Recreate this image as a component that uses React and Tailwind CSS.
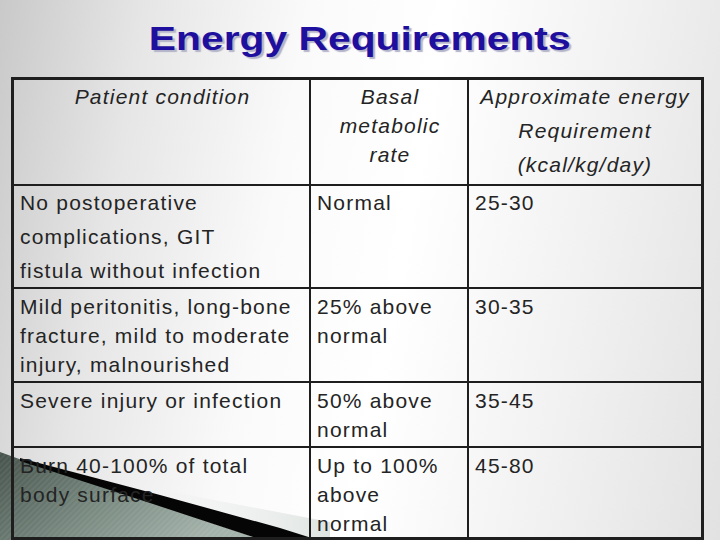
import React from "react";

const F = { fontFamily: '"Liberation Sans", Arial, sans-serif' };

function Cell({ children, className = "" }) {
  return (
    <div className={"border-[#1e1e1e] text-[21px] tracking-[1.2px] text-[#242424] pl-[6px] pr-[4px] " + className}>
      {children}
    </div>
  );
}

export default function App() {
  return (
    <div
      className="relative w-[720px] h-[540px] overflow-hidden bg-[linear-gradient(100deg,#c9c9c9_0%,#e6e6e6_18%,#fafafa_38%,#ffffff_55%,#f1f1f1_78%,#e2e2e2_100%)]"
      style={F}
    >
      <svg className="absolute left-0 top-0" width="720" height="540" viewBox="0 0 720 540">
        <defs>
          <linearGradient id="g1" x1="0" y1="0" x2="1" y2="0.4">
            <stop offset="0" stopColor="#45524b" />
            <stop offset="0.5" stopColor="#76877e" />
            <stop offset="1" stopColor="#a3b2aa" />
          </linearGradient>
          <pattern id="st" width="4" height="4" patternUnits="userSpaceOnUse" patternTransform="rotate(45)">
            <rect width="2" height="4" fill="#ffffff" opacity="0.06" />
          </pattern>
          <linearGradient id="g2" x1="0" y1="0" x2="1" y2="0">
            <stop offset="0" stopColor="#f2f4f3" stopOpacity="0" />
            <stop offset="1" stopColor="#dfe4e1" />
          </linearGradient>
        </defs>
        <polygon points="120,482 330,522 330,540 300,540 160,497" fill="url(#g2)" />
        <polygon points="0,452 22,460 150,502 262,540 0,540" fill="url(#g1)" />
        <polygon points="0,452 22,460 150,502 262,540 0,540" fill="url(#st)" />
        <polygon points="20,458 160,495 280,528 318,540 262,540 150,503 20,461" fill="#050505" />
      </svg>

      <div className="relative">
        <div className="h-[77px] pt-[18px] text-center">
          <span
            className="inline-block scale-x-[1.2] text-[34px] leading-[40px] font-bold text-[#1f0f9e] [text-shadow:2px_2px_1px_#b3b3c9]"
          >
            Energy Requirements
          </span>
        </div>

        <div className="ml-[11px] w-[693px] h-[463px] border-[3px] border-[#1e1e1e] grid grid-cols-[297px_158px_232px] grid-rows-[106px_103px_94px_65px_1fr]">
          <Cell className="border-r-2 border-b-2 italic text-center leading-[29px] pt-[2px]">Patient condition</Cell>
          <Cell className="border-r-2 border-b-2 italic text-center leading-[29px] pt-[2px]">
            Basal<br />metabolic<br />rate
          </Cell>
          <Cell className="border-b-2 italic text-center leading-[34px] pt-0 !pl-0 !pr-0">
            Approximate energy<br />Requirement<br />(kcal/kg/day)
          </Cell>

          <Cell className="border-r-2 border-b-2 leading-[34px]">
            No postoperative<br />complications, GIT<br />fistula without infection
          </Cell>
          <Cell className="border-r-2 border-b-2 leading-[29px] pt-[2px]">Normal</Cell>
          <Cell className="border-b-2 leading-[29px] pt-[2px]">25-30</Cell>

          <Cell className="border-r-2 border-b-2 leading-[29px] pt-[3px]">
            Mild peritonitis, long-bone<br />fracture, mild to moderate<br />injury, malnourished
          </Cell>
          <Cell className="border-r-2 border-b-2 leading-[29px] pt-[3px]">
            25% above<br />normal
          </Cell>
          <Cell className="border-b-2 leading-[29px] pt-[3px]">30-35</Cell>

          <Cell className="border-r-2 border-b-2 leading-[29px] pt-[3px]">Severe injury or infection</Cell>
          <Cell className="border-r-2 border-b-2 leading-[29px] pt-[3px]">
            50% above<br />normal
          </Cell>
          <Cell className="border-b-2 leading-[29px] pt-[3px]">35-45</Cell>

          <Cell className="border-r-2 leading-[29px] pt-[3px]">
            Burn 40-100% of total<br />body surface
          </Cell>
          <Cell className="border-r-2 leading-[29px] pt-[3px]">
            Up to 100%<br />above<br />normal
          </Cell>
          <Cell className="leading-[29px] pt-[3px]">45-80</Cell>
        </div>
      </div>
    </div>
  );
}
